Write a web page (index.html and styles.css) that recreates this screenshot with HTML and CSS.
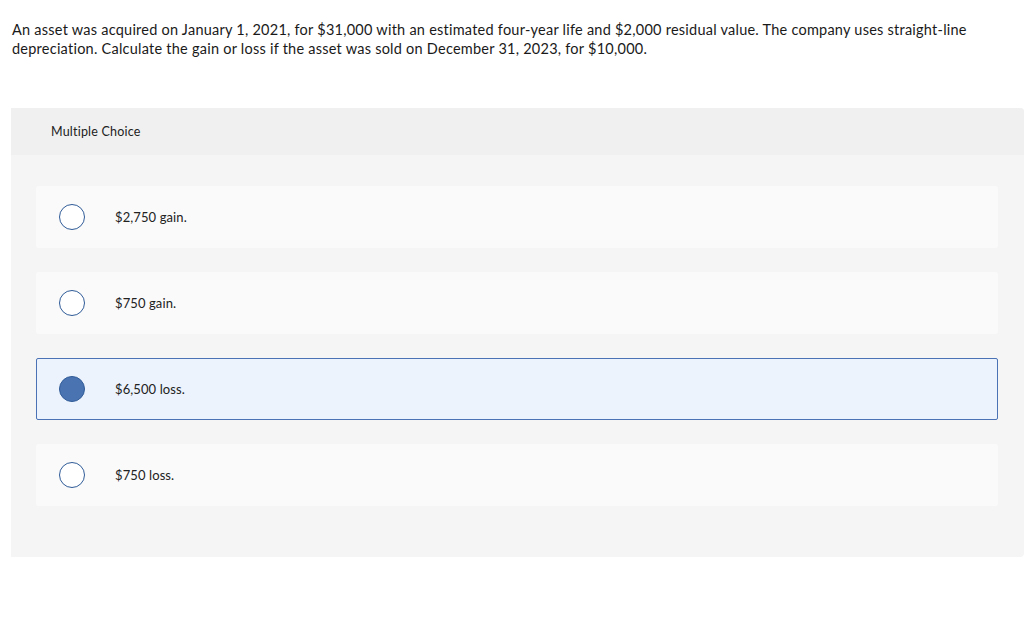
FILE: index.html
```html
<!DOCTYPE html>
<html>
<head>
<meta charset="utf-8">
<link rel="stylesheet" href="styles.css">
</head>
<body>
<div class="question">An asset was acquired on January 1, 2021, for $31,000 with an estimated four-year life and $2,000 residual value. The company uses straight-line depreciation. Calculate the gain or loss if the asset was sold on December 31, 2023, for $10,000.</div>
<div class="panel">
  <div class="panel-head">Multiple Choice</div>
  <div class="options">
    <div class="option"><span class="radio"></span><span class="label">$2,750 gain.</span></div>
    <div class="option"><span class="radio"></span><span class="label">$750 gain.</span></div>
    <div class="option selected"><span class="radio"></span><span class="label">$6,500 loss.</span></div>
    <div class="option"><span class="radio"></span><span class="label">$750 loss.</span></div>
  </div>
</div>
</body>
</html>
```
FILE: styles.css
```css
html, body {
  margin: 0;
  padding: 0;
  background: #ffffff;
}
body {
  font-family: Lato, "Liberation Sans", sans-serif;
  color: #1a1a1a;
}
.question {
  padding: 20px 40px 0 12px;
  font-size: 14.5px;
  letter-spacing: 0.24px;
  line-height: 19px;
  height: 88px;
}
.panel {
  margin-left: 11px;
  background: #f5f5f5;
  border-radius: 0 4px 4px 0;
  height: 449px;
}
.panel-head {
  background: #f0f0f0;
  height: 47px;
  display: flex;
  align-items: center;
  padding-left: 40px;
  font-size: 12.5px;
  letter-spacing: 0.2px;
  color: #222;
  border-radius: 0 4px 0 0;
}
.options {
  padding: 31px 26px 0 25px;
  display: flex;
  flex-direction: column;
  gap: 24px;
}
.option {
  height: 62px;
  background: #fafafa;
  border-radius: 2px;
  display: flex;
  align-items: center;
  box-sizing: border-box;
  padding-left: 23px;
}
.option.selected {
  background: #ecf3fc;
  border: 1px solid #4a72b4;
  padding-left: 22px;
}
.radio {
  width: 24px;
  height: 24px;
  border: 1.3px solid #2f5b97;
  border-radius: 50%;
  background: #fff;
  box-sizing: content-box;
  flex: none;
}
.option.selected .radio {
  background: #4a73b2;
  border-color: #2f5b97;
}
.label {
  margin-left: 30px;
  font-size: 13px;
  letter-spacing: 0.1px;
  color: #222;
}
```
